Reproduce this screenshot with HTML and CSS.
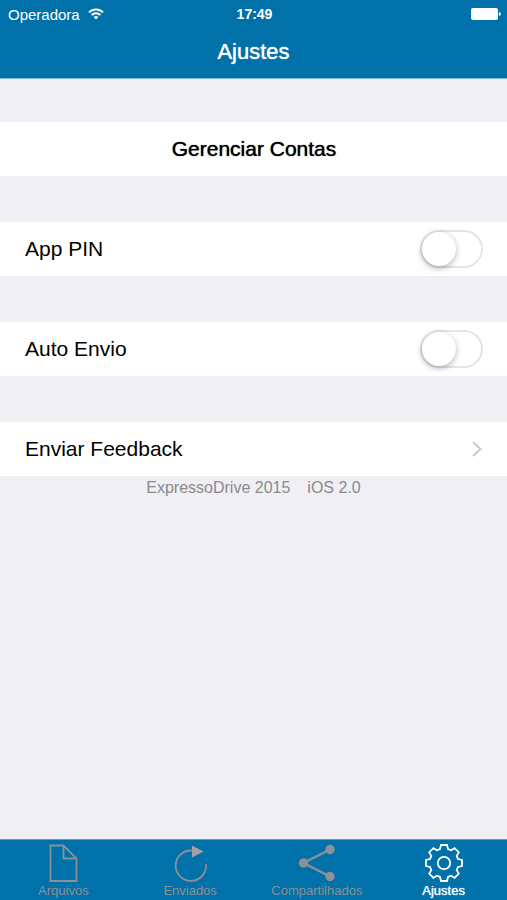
FILE: index.html
```html
<!DOCTYPE html>
<html lang="pt-BR">
<head>
  <meta charset="UTF-8" />
  <meta name="viewport" content="width=device-width, initial-scale=1.0"/>
  <title>Ajustes</title>
  <link rel="stylesheet" href="styles.css">
</head>
<body>

  <header>
    <div class="status-bar">
      <div class="carrier">
        <span>Operadora</span>
        <svg width="16" height="12" viewBox="0 0 16 12" fill="none" stroke="#fff" stroke-width="2">
          <path d="M1 4.4a10 10 0 0 1 14 0"/>
          <path d="M3.6 7a6.3 6.3 0 0 1 8.8 0"/>
          <path d="M8 11.5 5.6 9.1a3.4 3.4 0 0 1 4.8 0z" fill="#fff" stroke="none"/>
        </svg>
      </div>
      <div class="clock">17:49</div>
      <svg class="battery" width="30" height="12" viewBox="0 0 30 12" fill="#fff">
        <rect width="27" height="12" rx="2"/>
        <path d="M28 4c2.400 .6 2.400 3.400 0 4z"/>
      </svg>
    </div>
    <h1>Ajustes</h1>
  </header>

  <main>
    <button class="row accounts" type="button">Gerenciar Contas</button>

    <label class="row">
      App PIN
      <input class="switch" type="checkbox">
    </label>

    <label class="row">
      Auto Envio
      <input class="switch" type="checkbox">
    </label>

    <a class="row" href="#feedback">
      Enviar Feedback
      <svg width="12" height="18" viewBox="0 0 12 18" fill="none" stroke="#c7c7cc" stroke-width="2">
        <path d="M2 2l7.500 7L2 16"/>
      </svg>
    </a>

    <p class="version"><span>ExpressoDrive 2015</span><span>iOS 2.0</span></p>
  </main>

  <nav class="tab-bar">
    <a class="tab" href="#arquivos">
      <svg width="40" height="40" viewBox="-20 -20 40 40" fill="none" stroke="currentColor" stroke-width="1.800">
        <path d="M-12.500 -17.500H.5L13.500 -4.500V18H-12.500z"/>
        <path d="M.5 -17.500V-4.500H13.500"/>
      </svg>
      Arquivos
    </a>
    <a class="tab" href="#enviados">
      <svg width="40" height="40" viewBox="-20 -20 40 40" fill="none" stroke="currentColor" stroke-width="1.800">
        <path d="M3 -12.500H1A15.200 15.200 0 1 0 16 4V1"/>
        <path d="M2 -17.500L13.500 -11.500L2 -5.500z" fill="#a8a0a3" stroke="none"/>
      </svg>
      Enviados
    </a>
    <a class="tab" href="#compartilhados">
      <svg width="40" height="40" viewBox="-20 -20 40 40" fill="currentColor" stroke="currentColor" stroke-width="2.400">
        <path d="M13 -13.500L-13.500 0L13 13.500" fill="none"/>
        <circle cx="13" cy="-13.500" r="4.700" stroke="none"/>
        <circle cx="-13.500" cy="0" r="4.700" stroke="none"/>
        <circle cx="13" cy="13.500" r="4.700" stroke="none"/>
      </svg>
      Compartilhados
    </a>
    <a class="tab active" href="#ajustes">
      <svg width="40" height="40" viewBox="-20 -20 40 40" fill="none" stroke="currentColor" stroke-width="1.800">
        <path d="M-3 -18H3L4 -14L7.100 -12.700L10.600 -14.800L14.800 -10.600L12.700 -7.100L14 -4L18 -3V3L14 4L12.700 7.100L14.800 10.600L10.600 14.800L7.100 12.700L4 14L3 18H-3L-4 14L-7.100 12.700L-10.600 14.800L-14.800 10.600L-12.700 7.100L-14 4L-18 3V-3L-14 -4L-12.700 -7.100L-14.800 -10.600L-10.600 -14.800L-7.100 -12.700L-4 -14z"/>
        <circle r="6.200"/>
      </svg>
      Ajustes
    </a>
  </nav>

</body>
</html>
```
FILE: styles.css
```css
* {
  box-sizing: border-box;
}

body {
  margin: 0;
  min-height: 100vh;
  display: flex;
  flex-direction: column;
  font-family: 'Liberation Sans', Arial, sans-serif;
  background-color: #efeff4;
  color: #000;
}

header {
  background-color: #0071a9;
  color: #fff;
  border-bottom: 1px solid #7db8d6;
}

.status-bar {
  display: grid;
  grid-template-columns: 1fr auto 1fr;
  align-items: center;
  height: 28px;
  padding: 0 6px 0 8px;
}

.carrier {
  display: flex;
  align-items: center;
  gap: 8px;
  font-size: 15px;
}

.clock {
  font-size: 14px;
  font-weight: bold;
}

.battery {
  justify-self: end;
}

header h1 {
  margin: 0;
  padding-bottom: 2px;
  font-size: 22px;
  font-weight: normal;
  line-height: 48px;
  text-align: center;
  text-shadow: 0 0 1px #fff;
}

main {
  flex: 1;
  display: flex;
  flex-direction: column;
  gap: 46px;
  padding-top: 43px;
}

.row {
  display: flex;
  justify-content: space-between;
  align-items: center;
  height: 54px;
  padding: 0 24px 0 25px;
  border: 0;
  background-color: #fff;
  color: #000;
  font-family: inherit;
  font-size: 21px;
  text-decoration: none;
}

.accounts {
  justify-content: center;
  text-shadow: 0 0 1px #000;
}

.switch {
  appearance: none;
  width: 63px;
  height: 38px;
  margin: 0;
  border: 2px solid #e5e5e5;
  border-radius: 19px;
  background-color: #fff;
}

.switch::before {
  content: "";
  display: block;
  width: 34px;
  height: 34px;
  border-radius: 50%;
  background-color: #fff;
  box-shadow: 0 2px 6px rgba(0, 0, 0, 0.3);
}

.switch:checked {
  background-color: #4cd964;
}

.switch:checked::before {
  margin-left: auto;
}

.version {
  display: flex;
  justify-content: center;
  gap: 17px;
  margin: -43px 0 0;
  color: #8a8a8e;
  font-size: 16px;
  line-height: 18px;
}

.tab-bar {
  display: grid;
  grid-template-columns: repeat(4, 1fr);
  border-top: 1px solid #5a9fc0;
  background-color: #0071a9;
}

.tab {
  display: flex;
  flex-direction: column;
  align-items: center;
  padding: 3px 0 1px;
  color: #8e9094;
  font-size: 13px;
  line-height: 16px;
  text-decoration: none;
}

.tab.active {
  color: #fff;
  text-shadow: 0 0 1px #fff;
}
```
